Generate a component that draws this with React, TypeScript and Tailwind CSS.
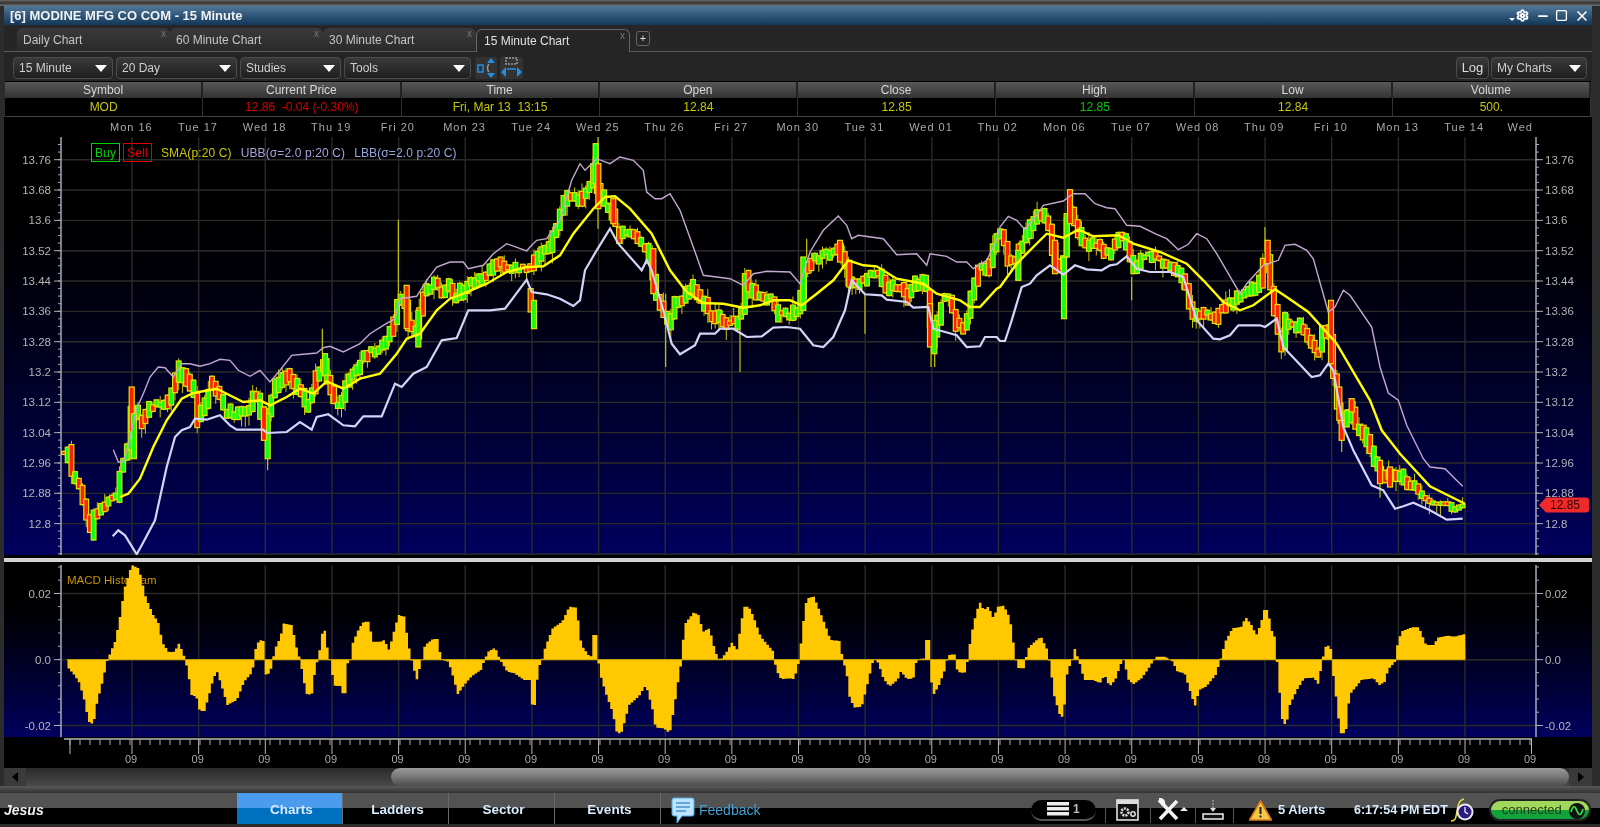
import { Minus, Settings, Square, X } from 'lucide-react'

type Pt = [number, number]

// zoom-crop readings -> page pixels
const seg = (ox: number, oy: number, pts: number[][]): Pt[] => pts.map(p => [ox + p[0] / 3, oy + p[1] / 3] as Pt)
const seg2 = (ox: number, pts: number[][]): Pt[] => pts.map(p => [ox + p[0] / 2.0907, 565 + p[1] / 3] as Pt)

const upper = [
  ...seg(60, 137, [[160,938],[175,975],[190,975],[205,925],[215,880],[232,810],[250,770],[270,720],[295,690],[315,692],[340,720],[365,680],[390,680],[420,688],[450,680],[480,667],[510,670],[535,700],[570,718],[600,700],[630,735],[660,700],[695,655],[730,652],[770,648],[790,632],[810,628],[850,645],[900,620],[930,590],[970,565],[1005,545],[1020,485],[1070,478],[1100,430],[1130,390],[1170,375],[1210,375],[1225,395],[1270,385],[1300,350],[1340,320],[1400,342]]),
  ...seg(530, 137, [[0,330],[20,310],[50,305],[90,250],[125,130],[150,80],[165,100],[200,65],[240,80],[270,60],[310,70],[340,100],[350,165],[375,185],[395,185],[420,170],[450,220],[490,330],[520,415],[560,420],[600,425],[640,445],[670,410],[710,403],[780,405],[810,440],[840,345],[880,280],[925,237],[950,265],[965,305],[985,295],[1060,305],[1100,353],[1160,350],[1190,385],[1200,350],[1250,358],[1280,375],[1310,375],[1330,395],[1370,370],[1400,310]]),
  ...seg(1000, 137, [[0,270],[25,238],[50,250],[75,278],[110,235],[130,205],[190,192],[220,170],[255,170],[285,200],[320,212],[345,215],[380,265],[420,268],[470,292],[500,305],[535,338],[565,322],[590,290],[620,305],[650,350],[720,470],[740,440],[790,385],[835,370],[855,325],[885,322],[920,340],[940,365],[985,525],[1005,510],[1030,460],[1050,475],[1115,570],[1140,690],[1165,768],[1195,790],[1220,865],[1270,965],[1290,990],[1335,995],[1365,1025],[1388,1048]]),
]

const lower = [
  ...seg(60, 137, [[158,1198],[175,1180],[195,1195],[230,1252],[245,1225],[285,1150],[320,990],[345,900],[365,880],[390,870],[405,845],[440,848],[480,835],[510,865],[530,878],[610,878],[620,888],[680,885],[720,855],[755,878],[770,840],[805,832],[850,865],[885,868],[910,838],[965,838],[1005,740],[1025,750],[1060,710],[1100,690],[1145,610],[1190,603],[1225,520],[1290,520],[1335,515],[1400,428]]),
  ...seg(530, 137, [[5,465],[50,472],[90,485],[130,507],[150,490],[165,400],[200,340],[240,275],[265,320],[335,400],[350,370],[365,400],[400,520],[425,620],[450,652],[495,625],[510,590],[555,590],[570,575],[610,575],[650,600],[695,598],[730,572],[770,570],[810,575],[850,625],[880,630],[910,600],[945,520],[965,430],[1005,472],[1055,475],[1070,488],[1130,495],[1150,512],[1195,510],[1210,575],[1280,595],[1310,630],[1350,628],[1365,600],[1400,600]]),
  ...seg(1000, 137, [[0,612],[15,612],[35,550],[65,450],[90,440],[110,415],[150,385],[190,413],[225,385],[260,397],[305,400],[330,385],[350,382],[380,358],[410,395],[450,405],[510,405],[550,420],[590,550],[640,605],[660,607],[690,595],[715,565],[780,565],[795,570],[830,545],[850,630],[935,720],[960,715],[985,680],[1000,700],[1030,870],[1060,940],[1115,1045],[1150,1060],[1185,1115],[1210,1108],[1240,1097],[1290,1120],[1340,1148],[1388,1145]]),
]

const sma = [
  ...seg(60, 137, [[180,1080],[205,1070],[240,1025],[280,930],[320,850],[365,785],[400,768],[470,755],[500,770],[550,795],[600,790],[630,805],[680,780],[720,755],[760,770],[800,733],[850,755],[900,725],[960,710],[1010,650],[1040,605],[1080,590],[1130,520],[1170,485],[1210,470],[1280,440],[1340,405],[1400,390]]),
  ...seg(530, 137, [[0,390],[40,388],[90,355],[130,290],[190,215],[225,180],[255,178],[300,215],[365,290],[420,400],[470,465],[520,498],[580,500],[640,512],[690,505],[730,490],[780,490],[815,505],[860,470],[910,430],[955,370],[1000,385],[1040,388],[1100,425],[1180,440],[1220,470],[1290,490],[1320,510],[1350,510],[1400,455]]),
  ...seg(1000, 137, [[0,450],[50,380],[100,330],[140,290],[190,302],[235,278],[280,298],[355,295],[400,320],[480,345],[560,380],[610,430],[670,495],[720,520],[760,505],[825,457],[860,480],[925,525],[1010,620],[1110,790],[1145,880],[1200,950],[1290,1048],[1395,1100]]),
]

const mid = [
  ...seg(60, 137, [[18,950],[25,915],[38,1005],[65,1050],[78,1120],[95,1185],[108,1120],[125,1125],[150,1085],[175,1070],[185,1000],[205,950],[215,820],[232,810],[250,860],[265,815],[290,800],[325,790],[345,745],[360,690],[385,740],[410,780],[415,850],[430,820],[445,780],[460,730],[480,780],[495,820],[515,835],[550,825],[575,815],[590,750],[615,870],[645,755],[680,715],[710,740],[740,800],[755,800],[770,720],[795,680],[825,800],[850,790],[860,740],[890,705],[920,650],[950,640],[980,620],[1005,550],[1015,490],[1040,490],[1050,570],[1075,590],[1090,470],[1130,440],[1150,470],[1170,445],[1190,490],[1215,450],[1240,435],[1280,420],[1305,380],[1340,385],[1380,395]]),
  ...seg(530, 137, [[10,400],[20,360],[60,330],[80,270],[110,190],[130,165],[150,190],[180,165],[195,100],[205,150],[225,190],[250,230],[270,300],[300,285],[320,310],[350,330],[370,400],[385,490],[420,570],[440,500],[460,490],[480,450],[510,480],[530,510],[550,540],[590,550],[620,560],[640,520],[650,410],[665,460],[690,480],[730,490],[745,530],[780,540],[810,510],[825,400],[850,365],[925,340],[950,390],[965,450],[1000,430],[1020,410],[1050,395],[1070,460],[1110,440],[1140,480],[1160,440],[1190,430],[1205,570],[1215,600],[1240,490],[1260,480],[1285,575],[1310,560],[1330,460],[1350,400],[1380,385],[1400,295]]),
  ...seg(1000, 137, [[10,290],[30,370],[50,370],[80,300],[115,220],[150,270],[165,350],[190,400],[200,300],[212,190],[230,260],[260,320],[290,322],[330,360],[345,330],[365,295],[385,330],[400,400],[430,360],[480,365],[520,400],[555,425],[580,530],[610,525],[650,545],[670,515],[710,490],[750,460],[780,440],[800,340],[830,540],[848,645],[860,545],[875,570],[900,570],[925,600],[945,630],[958,665],[972,580],[992,590],[1005,710],[1020,840],[1040,840],[1055,810],[1065,860],[1090,890],[1110,930],[1140,1000],[1160,1020],[1170,1020],[1200,1005],[1215,1035],[1250,1050],[1265,1075],[1300,1100],[1350,1100],[1360,1120],[1390,1105]]),
]

// hand-placed long candles: [x, top, bottom, green?]
type Tall = [number, number, number, boolean]
const toTall = (ox: number, list: Tall[]) => list.map(c => [ox + c[0] / 3, 137 + c[1] / 3, 137 + c[2] / 3, c[3]] as Tall)
const tall: Tall[] = [
  ...toTall(60, [[215,750,885,false],[222,830,965,true],[623,830,965,true],[612,810,910,false],[795,650,715,true],[1075,520,630,true],[1040,445,575,false],[1412,455,525,false],[1422,490,575,true]]),
  ...toTall(530, [[197,20,140,true],[205,80,215,false],[250,185,260,false],[370,335,470,false],[820,360,520,true],[930,310,375,false],[958,370,450,false],[1200,500,630,false],[1213,550,650,true]]),
  ...toTall(1000, [[192,360,545,true],[200,230,360,true],[210,158,260,false],[165,310,410,false],[55,340,430,true],[803,310,380,false],[993,490,680,false],[1140,970,1040,false],[1170,990,1050,false],[1055,785,825,false],[1040,820,870,true],[1025,850,910,false],[1018,750,850,false]]),
]

const wicks: [number, number, number][] = [
  [60 + 1015 / 3, 137 + 248 / 3, 137 + 490 / 3], [60 + 623 / 3, 137 + 960 / 3, 137 + 1000 / 3], [60 + 787 / 3, 137 + 575 / 3, 137 + 650 / 3],
  [530 + 204 / 3, 137, 137 + 275 / 3], [530 + 407 / 3, 137 + 470 / 3, 137 + 690 / 3], [530 + 630 / 3, 137 + 520 / 3, 137 + 705 / 3], [530 + 1005 / 3, 137 + 470 / 3, 137 + 590 / 3], [530 + 1203 / 3, 137 + 620 / 3, 137 + 690 / 3], [530 + 1214 / 3, 137 + 640 / 3, 137 + 690 / 3], [530 + 830 / 3, 137 + 305 / 3, 137 + 360 / 3],
  [1000 + 795 / 3, 137 + 270 / 3, 137 + 345 / 3], [1000 + 395 / 3, 137 + 420 / 3, 137 + 490 / 3], [1000 + 1025 / 3, 137 + 905 / 3, 137 + 945 / 3], [1000 + 1140 / 3, 137 + 1040 / 3, 137 + 1082 / 3],
]

const macd: Pt[] = [
  ...seg2(60, [[15,284],[18,310],[30,330],[40,352],[50,400],[60,470],[70,478],[78,410],[90,345],[98,290],[100,284],[105,265],[115,230],[125,160],[135,70],[150,0],[165,10],[180,100],[195,150],[205,170],[215,235],[228,262],[240,260],[248,235],[255,255],[262,284],[268,325],[275,390],[285,395],[292,438],[302,438],[310,400],[320,345],[328,318],[335,350],[350,420],[370,405],[385,350],[403,320],[405,284],[410,245],[417,225],[426,228],[428,284],[425,315],[432,332],[440,320],[445,284],[450,250],[460,220],[468,175],[485,180],[495,250],[502,284],[510,350],[517,392],[527,385],[535,300],[540,284],[545,235],[550,190],[555,200],[560,260],[565,290],[572,350],[578,375],[583,350],[590,385],[597,385],[602,290],[608,284],[612,235],[625,190],[635,170],[645,170],[655,230],[670,230],[678,225],[688,255],[700,190],[708,150],[720,155],[728,235],[735,284],[740,310],[745,350],[750,320],[757,284],[763,240],[780,222],[790,222],[797,284],[812,290],[820,325],[832,388],[845,360],[860,335],[880,315],[888,284],[895,260],[910,248],[920,284],[935,320],[950,325],[970,345],[982,345],[985,418],[993,420],[1000,310],[1008,284],[1015,245],[1030,190],[1050,170],[1065,125],[1080,128],[1090,240],[1105,270],[1112,275],[1115,210],[1123,210],[1125,284],[1130,330],[1140,380],[1155,440],[1165,508],[1175,500],[1190,420],[1210,395],[1225,360],[1240,440],[1245,488],[1262,490],[1275,505],[1285,420],[1295,325],[1300,284],[1305,180],[1325,142],[1335,150],[1345,200],[1358,190],[1370,260],[1380,287],[1395,258],[1405,232],[1415,255],[1430,125],[1440,125],[1450,155],[1465,215],[1480,240],[1492,260],[1497,315],[1508,343],[1525,340],[1535,343]]),
  ...seg2(790, [[20,284],[25,200],[35,100],[50,95],[60,130],[75,185],[85,225],[105,228],[110,284],[118,320],[125,400],[135,428],[150,425],[160,370],[170,310],[175,280],[185,295],[195,340],[208,365],[225,345],[232,320],[245,343],[258,340],[265,284],[280,280],[285,225],[293,225],[295,345],[300,390],[312,360],[325,310],[330,270],[345,268],[350,320],[365,325],[372,284],[378,215],[390,140],[397,112],[405,135],[415,125],[425,158],[435,125],[447,122],[460,160],[465,210],[472,284],[478,310],[492,310],[495,255],[510,232],[525,215],[538,255],[545,310],[552,390],[565,455],[572,455],[580,320],[590,285],[595,250],[605,290],[615,345],[635,345],[648,355],[658,330],[668,365],[680,345],[695,284],[700,284],[705,340],[718,358],[735,340],[750,310],[765,275],[785,275],[800,290],[810,320],[825,325],[840,395],[848,425],[855,375],[870,365],[890,330],[900,284],[910,230],[925,190],[945,185],[952,155],[965,180],[975,210],[985,175],[990,135],[1000,135],[1005,190],[1015,220],[1018,284],[1025,405],[1030,475],[1038,478],[1045,420],[1060,375],[1075,340],[1095,338],[1105,358],[1113,284],[1120,245],[1130,240],[1135,320],[1145,435],[1150,505],[1162,505],[1170,390],[1195,345],[1220,340],[1232,360],[1245,350],[1250,315],[1265,290],[1270,240],[1278,200],[1300,187],[1315,187],[1330,240],[1345,240],[1355,218],[1375,212],[1390,215],[1408,208]]),
]

const interp = (pts: Pt[], x: number) => {
  if (x <= pts[0][0]) return pts[0][1]
  for (let i = 1; i < pts.length; i++) {
    if (x <= pts[i][0]) {
      const [x0, y0] = pts[i - 1]
      const [x1, y1] = pts[i]
      return x1 === x0 ? y1 : y0 + ((x - x0) / (x1 - x0)) * (y1 - y0)
    }
  }
  return pts[pts.length - 1][1]
}

let seed = 41
const rnd = () => {
  seed = (seed * 16807) % 2147483647
  return seed / 2147483647
}

const candles: { x: number; top: number; bot: number; hi: number; lo: number; up: boolean }[] = []
for (let x = 64; x < 1463; x += 3.7) {
  const a = interp(mid, x - 1.8)
  const b = interp(mid, x + 1.8)
  // flat stretch on the far right is much tighter than the rest
  const pad = x > 1420 ? 1 + rnd() : 1.5 + rnd() * 4.5
  const jitter = x > 1420 ? 0 : (rnd() - 0.5) * 7
  const top = Math.min(a, b) - pad + jitter
  const bot = Math.max(a, b) + pad + jitter
  candles.push({
    x,
    top,
    bot,
    hi: top - (rnd() < 0.55 ? rnd() * 9 : 1),
    lo: bot + (rnd() < 0.55 ? rnd() * 11 : 1),
    up: b < a ? rnd() < 0.75 : rnd() < 0.4,
  })
}

const ZERO = 659.7
let macdPath = `M67.5 ${ZERO}`
for (let x = 67.5; x < 1465; x += 2.56) {
  const y = interp(macd, x + 1.28)
  macdPath += `L${x.toFixed(2)} ${y.toFixed(1)}L${(x + 2.56).toFixed(2)} ${y.toFixed(1)}`
}
macdPath += `L1465.5 ${ZERO}Z`

const grid = Array.from({ length: 21 }, (_, i) => 132 + i * 66.65)
const priceLines = Array.from({ length: 14 }, (_, i) => 159.7 + i * 30.33)
const priceLabels = ['13.76', '13.68', '13.6', '13.52', '13.44', '13.36', '13.28', '13.2', '13.12', '13.04', '12.96', '12.88', '12.8']
const priceTicks = Array.from({ length: 55 }, (_, i) => 144.5 + i * 7.58)
const macdTicks = Array.from({ length: 13 }, (_, i) => 567 + i * 13.2)
const macdLabels: [string, number][] = [['0.02', 593.5], ['0.0', ZERO], ['-0.02', 725.5]]
const days = ['Mon 16', 'Tue 17', 'Wed 18', 'Thu 19', 'Fri 20', 'Mon 23', 'Tue 24', 'Wed 25', 'Thu 26', 'Fri 27', 'Mon 30', 'Tue 31', 'Wed 01', 'Thu 02', 'Mon 06', 'Tue 07', 'Wed 08', 'Thu 09', 'Fri 10', 'Mon 13', 'Tue 14']
const rulerMinor = Array.from({ length: 147 }, (_, i) => 70 + i * 10)
const rulerMajor = [70, ...grid, 1531.5]

const line = (pts: Pt[]) => pts.map(p => `${p[0].toFixed(1)},${p[1].toFixed(1)}`).join(' ')

function Select({ label, className }: { label: string; className: string }) {
  return (
    <div className={`h-[22px] flex items-center justify-between pl-[5px] pr-[5px] rounded-[4px] border border-[#4c4c4c] bg-linear-to-b from-[#3a3a3a] to-[#1f1f1f] text-[12px] text-[#cfcfcf] ${className}`}>
      <span>{label}</span>
      <span className="w-0 h-0 border-l-[6px] border-r-[6px] border-t-[7px] border-l-transparent border-r-transparent border-t-white" />
    </div>
  )
}

function Tab({ label, active }: { label: string; active?: boolean }) {
  return (
    <div className={`relative h-[23px] flex items-center rounded-t-[6px] text-[12px] ${active ? 'w-[154px] pl-[7px] bg-[#262626] border-t border-l border-r border-[#666] text-[#e0e0e0] -mb-px' : 'w-[153px] pl-[6px] bg-linear-to-b from-[#3a3a3a] to-[#2a2a2a] text-[#c4c4c4]'}`}>
      {label}
      <span className="absolute right-[4px] top-[0px] text-[10px] leading-[12px] text-[#777]">x</span>
    </div>
  )
}

const quotes: { head: string; value: string; color: string }[] = [
  { head: 'Symbol', value: 'MOD', color: 'text-[#c8c800]' },
  { head: 'Current Price', value: '12.86  -0.04 (-0.30%)', color: 'text-[#d80000]' },
  { head: 'Time', value: 'Fri, Mar 13  13:15', color: 'text-[#c8c800]' },
  { head: 'Open', value: '12.84', color: 'text-[#c8c800]' },
  { head: 'Close', value: '12.85', color: 'text-[#c8c800]' },
  { head: 'High', value: '12.85', color: 'text-[#00c800]' },
  { head: 'Low', value: '12.84', color: 'text-[#c8c800]' },
  { head: 'Volume', value: '500.', color: 'text-[#c8c800]' },
]

function NavButton({ label, active }: { label: string; active?: boolean }) {
  return (
    <div className={`w-[106px] h-full flex items-center justify-center pl-[4px] pt-[3px] text-[13.5px] font-bold border-r border-[#6a6a6a] text-[#d8ecff] ${active ? 'bg-linear-to-b from-[#4b9bee] from-50% to-[#0070c0] to-50%' : 'bg-linear-to-b from-[#525252] from-50% to-black to-50%'}`}>
      {label}
    </div>
  )
}

const Sep = () => <div className="w-px h-[26px] bg-[#555]" />

export default function App() {
  return (
    <div className="w-[1600px] h-[827px] overflow-hidden bg-[#2c2c2c] flex flex-col text-white blur-[0.4px]" style={{ fontFamily: '"Liberation Sans", Arial, sans-serif' }}>
      <div className="h-[6px] bg-linear-to-b from-[#666] via-[#333] to-[#777]" />

      <div className="flex-1 min-h-0 flex flex-col mx-[4px] mr-[8px]">
        {/* title bar */}
        <div className="h-[19px] flex items-center justify-between pl-[6px] pr-[2px] bg-linear-to-b from-[#507899] to-[#113759]">
          <span className="text-[13px] font-bold text-[#f2f2f2]">[6] MODINE MFG CO COM - 15 Minute</span>
          <div className="flex items-center text-white">
            <span className="w-0 h-0 mt-[8px] mr-[1px] border-l-[3px] border-r-[3px] border-t-[3px] border-l-transparent border-r-transparent border-t-white" />
            <Settings className="w-[13px] h-[13px] mr-[7px]" strokeWidth={3.5} />
            <Minus className="w-[14px] h-[14px] mr-[5px]" strokeWidth={3} />
            <Square className="w-[13px] h-[13px] mr-[6px]" strokeWidth={2.5} />
            <X className="w-[16px] h-[16px]" strokeWidth={2.5} />
          </div>
        </div>

        {/* chart tabs */}
        <div className="h-[27px] flex items-end pl-[13px] bg-[#262626] border-b border-[#5a5a5a]">
          <Tab label="Daily Chart" />
          <Tab label="60 Minute Chart" />
          <Tab label="30 Minute Chart" />
          <Tab label="15 Minute Chart" active />
          <div className="w-[14px] h-[15px] ml-[6px] mb-[5px] flex items-center justify-center rounded-[3px] border border-[#666] text-[11px] leading-none text-[#ddd]">+</div>
        </div>

        {/* toolbar */}
        <div className="h-[29px] flex items-center pt-[3px] pl-[9px] pr-[5px] bg-[#252525]">
          <Select label="15 Minute" className="w-[100px] mr-[3px]" />
          <Select label="20 Day" className="w-[121px] mr-[3px]" />
          <Select label="Studies" className="w-[101px] mr-[3px]" />
          <Select label="Tools" className="w-[127px] mr-[4px]" />
          <svg width="22" height="22" viewBox="0 0 22 22" className="bg-[#333] rounded-[2px] mr-[3px]">
            <rect x="3" y="8" width="5" height="7" fill="none" stroke="#1e90e8" strokeWidth="1.5" />
            <path d="M16 1l4 5h-8zM16 21l4-5h-8z" fill="#1e90e8" />
            <path d="M14 7c-2 2-2 6 0 8" stroke="#999" strokeWidth="1.5" fill="none" />
          </svg>
          <svg width="23" height="22" viewBox="0 0 23 22" className="bg-[#333] rounded-[2px]">
            <rect x="6" y="1" width="11" height="6" fill="none" stroke="#999" strokeWidth="1.5" strokeDasharray="2 1" />
            <path d="M1 15l5-5v10zM22 15l-5-5v10z" fill="#1e90e8" />
            <path d="M7 12h9" stroke="#1e90e8" strokeWidth="1.5" />
          </svg>
          <div className="flex-1" />
          <div className="w-[33px] h-[22px] mr-[2px] flex items-center justify-center rounded-[4px] border border-[#4c4c4c] bg-linear-to-b from-[#3a3a3a] to-[#1f1f1f] text-[13px] text-[#ddd]">Log</div>
          <Select label="My Charts" className="w-[96px]" />
        </div>

        {/* quote table */}
        <div className="grid grid-cols-8 ml-[1px] mr-[1px] bg-black">
          {quotes.map(q => (
            <div key={q.head} className="h-[16px] mt-px flex items-center justify-center bg-linear-to-b from-[#585858] to-[#333] border-r-2 border-[#222] text-[12px] text-[#d8d8d8]">{q.head}</div>
          ))}
          {quotes.map(q => (
            <div key={q.head} className={`h-[19px] flex items-center justify-center whitespace-pre border-r border-[#333] border-b border-b-[#444] text-[12px] ${q.color}`}>{q.value}</div>
          ))}
        </div>

        {/* day labels */}
        <div className="h-[20px] flex items-center pl-[94px] bg-black text-[11px] tracking-[1px] text-[#a8a8a8]">
          {days.map(d => (
            <div key={d} className="w-[66.65px] shrink-0 text-center">{d}</div>
          ))}
          <div className="pl-[10px]">Wed</div>
        </div>

        {/* price panel */}
        <div className="relative h-[418px] bg-linear-to-b from-black from-5% to-[#00005e]">
          <svg width="1588" height="418" viewBox="4 137 1588 418" className="block">
            {grid.map(x => <line key={x} x1={x} x2={x} y1={137} y2={555} stroke="#2a2a2a" strokeWidth="1.4" />)}
            {priceLines.map(y => <line key={y} x1={62} x2={1536} y1={y} y2={y} stroke="#2a2a2a" strokeWidth="1.4" />)}
            <line x1={61} x2={61} y1={137} y2={555} stroke="#a8a8b8" strokeWidth="1.5" />
            <line x1={1536} x2={1536} y1={137} y2={555} stroke="#a8a8b8" strokeWidth="1.5" />
            {priceTicks.map(y => (
              <g key={y} stroke="#a8a8b8">
                <line x1={58} x2={61} y1={y} y2={y} />
                <line x1={1536} x2={1539} y1={y} y2={y} />
              </g>
            ))}
            {priceLabels.map((t, i) => {
              const y = 159.7 + i * 30.33
              return (
                <g key={t}>
                  <line x1={54} x2={61} y1={y} y2={y} stroke="#b0b0b0" />
                  <line x1={1536} x2={1543} y1={y} y2={y} stroke="#b0b0b0" />
                  <text x={51} y={y + 4} textAnchor="end" fontSize="11.5" fill="#b4b4b4">{t}</text>
                  <text x={1545} y={y + 4} fontSize="11.5" fill="#b4b4b4">{t}</text>
                </g>
              )
            })}

            {candles.map(c => (
              <g key={c.x}>
                <line x1={c.x} x2={c.x} y1={c.hi} y2={c.lo} stroke="#c8c800" />
                <rect x={c.x - 2.4} y={c.top} width={4.8} height={c.bot - c.top} fill={c.up ? '#10ff10' : '#ff2000'} stroke="#e4e400" strokeWidth="1.2" />
              </g>
            ))}
            {wicks.map(w => <line key={w[0]} x1={w[0]} x2={w[0]} y1={w[1]} y2={w[2]} stroke="#c8c800" strokeWidth="1.2" />)}
            {tall.map(c => (
              <rect key={c[0]} x={c[0] - 2.5} y={c[1]} width={5} height={c[2] - c[1]} fill={c[3] ? '#10ff10' : '#ff2000'} stroke="#e4e400" strokeWidth="1.2" />
            ))}

            <polyline points={line(upper)} fill="none" stroke="#c4a8d0" strokeWidth="1.4" />
            <polyline points={line(lower)} fill="none" stroke="#d4d4f8" strokeWidth="2.2" />
            <polyline points={line(sma)} fill="none" stroke="#ffff00" strokeWidth="2.4" />

            {/* last price flag */}
            <path d="M1539 505l7-7.500h40q3 0 3 3v9q0 3-3 3h-40z" fill="#f02a2a" />
            <text x={1565} y={509} textAnchor="middle" fontSize="12" fill="#300">12.85</text>
          </svg>

          {/* study legend */}
          <div className="absolute left-[87px] top-[6px] flex items-center text-[12px] tracking-[0.12px]">
            <div className="w-[29px] h-[19px] flex items-center justify-center border border-[#00d000] text-[#00d000]">Buy</div>
            <div className="w-[29px] h-[19px] ml-[3px] flex items-center justify-center border border-[#e00000] text-[#e00000]">Sell</div>
            <div className="ml-[9px] text-[#c8c800]">SMA(p:20 C)</div>
            <div className="ml-[9px] text-[#a8a0dc]">UBB(σ=2.0 p:20 C)</div>
            <div className="ml-[9px] text-[#94a4dc]">LBB(σ=2.0 p:20 C)</div>
          </div>
        </div>

        <div className="h-[3px] bg-black" />
        <div className="h-[4px] bg-[#d2d2d2]" />
        <div className="h-[3px] bg-black" />

        {/* MACD panel */}
        <div className="h-[172px] bg-linear-to-b from-black from-5% to-[#00005e]">
          <svg width="1588" height="172" viewBox="4 565 1588 172" className="block">
            {grid.map(x => <line key={x} x1={x} x2={x} y1={565} y2={737} stroke="#2a2a2a" strokeWidth="1.4" />)}
            {macdLabels.map(([t, y]) => (
              <g key={t}>
                <line x1={62} x2={1536} y1={y} y2={y} stroke="#2a2a2a" strokeWidth="1.4" />
                <line x1={54} x2={61} y1={y} y2={y} stroke="#b0b0b0" />
                <line x1={1536} x2={1543} y1={y} y2={y} stroke="#b0b0b0" />
                <text x={51} y={y + 4} textAnchor="end" fontSize="11.5" fill="#b4b4b4">{t}</text>
                <text x={1545} y={y + 4} fontSize="11.5" fill="#b4b4b4">{t}</text>
              </g>
            ))}
            <line x1={61} x2={61} y1={565} y2={737} stroke="#a8a8b8" strokeWidth="1.5" />
            <line x1={1536} x2={1536} y1={565} y2={737} stroke="#a8a8b8" strokeWidth="1.5" />
            {macdTicks.map(y => (
              <g key={y} stroke="#a8a8b8">
                <line x1={58} x2={61} y1={y} y2={y} />
                <line x1={1536} x2={1539} y1={y} y2={y} />
              </g>
            ))}
            <text x={67} y={584} fontSize="11.5" fill="#c89400">MACD Histogram</text>
            <path d={macdPath} fill="#ffc800" />
            <line x1={67} x2={1465} y1={ZERO} y2={ZERO} stroke="#d8b000" />
          </svg>
        </div>

        {/* time ruler */}
        <div className="h-[31px] bg-black">
          <svg width="1588" height="31" viewBox="4 737 1588 31" className="block">
            <line x1={64} x2={1532} y1={739} y2={739} stroke="#b8b8b8" strokeWidth="1.5" />
            {rulerMinor.map(x => <line key={x} x1={x} x2={x} y1={739} y2={745} stroke="#a8a8a8" />)}
            {rulerMajor.map(x => <line key={x} x1={x} x2={x} y1={739} y2={754} stroke="#b8b8b8" />)}
            {grid.map(x => <text key={x} x={x - 1} y={763} textAnchor="middle" fontSize="11" fill="#a8a8a8">09</text>)}
            <text x={1524} y={763} fontSize="11" fill="#a8a8a8">09</text>
          </svg>
        </div>

        {/* scroll bar */}
        <div className="h-[18px] flex items-center bg-linear-to-b from-[#2a2a2a] to-[#4a4a4a]">
          <div className="w-[22px] h-full flex items-center justify-center bg-[#3a3a3a]">
            <span className="w-0 h-0 border-t-[5px] border-b-[5px] border-r-[6px] border-t-transparent border-b-transparent border-r-black" />
          </div>
          <div className="w-[365px]" />
          <div className="w-[1178px] h-full rounded-l-[14px] rounded-r-[14px] bg-linear-to-b from-[#9a9a9a] via-[#777] to-[#4c4c4c]" />
          <div className="flex-1 h-full flex items-center justify-center bg-[#3a3a3a]">
            <span className="w-0 h-0 border-t-[5px] border-b-[5px] border-l-[6px] border-t-transparent border-b-transparent border-l-black" />
          </div>
        </div>
      </div>

      <div className="h-[7px] bg-linear-to-b from-[#5a5a5a] to-[#333]" />

      {/* status bar */}
      <div className="h-[31px] flex items-center bg-linear-to-b from-[#525252] from-50% to-black to-50% text-[#d8ecff]">
        <div className="w-[237px] pl-[4px] pt-[3px] text-[14px] font-bold italic text-[#eee]">Jesus</div>
        <NavButton label="Charts" active />
        <NavButton label="Ladders" />
        <NavButton label="Sector" />
        <NavButton label="Events" />
        <div className="flex-1 h-full flex items-center pt-[3px]">
          <svg width="24" height="30" viewBox="0 0 24 30" className="ml-[10px]">
            <path d="M3 3h18q2 0 2 2v14q0 2-2 2h-10l-5 7v-7h-3q-2 0-2-2v-14q0-2 2-2z" fill="#bde4ff" stroke="#4aa8e8" />
            <path d="M5 8h14M5 12h14M5 16h10" stroke="#4a90c8" strokeWidth="1.5" />
          </svg>
          <span className="ml-[4px] w-[332px] text-[14px] text-[#3fa2d8]">Feedback</span>

          <div className="w-[65px] h-[21px] flex items-center pl-[16px] rounded-full bg-black border-b-2 border-[#555] text-[13px]">
            <svg width="24" height="14" viewBox="0 0 24 14" fill="#eee"><path d="M0 0h22v3.500h-22zM0 5h22v3.500h-22zM0 10h22v3.500h-22z" /></svg>
            <span className="ml-[2px] font-bold text-[12px] text-[#bbb]">1</span>
          </div>
          <div className="ml-[9px]"><Sep /></div>
          <svg width="24" height="24" viewBox="0 0 24 24" className="ml-[10px]">
            <rect x="1" y="2" width="21" height="20" fill="#111" stroke="#eee" strokeWidth="1.500" />
            <rect x="1" y="2" width="21" height="4" fill="#ddd" />
            <circle cx="9" cy="14" r="3.500" fill="none" stroke="#ddd" strokeWidth="2.500" strokeDasharray="2 1" />
            <circle cx="17" cy="16" r="2.200" fill="none" stroke="#ddd" strokeWidth="1.500" />
          </svg>
          <div className="ml-[10px]"><Sep /></div>
          <svg width="32" height="24" viewBox="0 0 32 24" className="ml-[6px]">
            <path d="M2 2l18 19M20 3l-17 18" stroke="#f4f4f4" strokeWidth="3.500" />
            <path d="M2 1q5 0 5 5" stroke="#f4f4f4" strokeWidth="2.500" fill="none" />
            <path d="M23 13l4-4 4 4z" fill="#eee" />
          </svg>
          <div className="ml-[6px]"><Sep /></div>
          <svg width="22" height="22" viewBox="0 0 22 22" className="ml-[6px]">
            <path d="M11 1v10" stroke="#bbb" strokeDasharray="2 1" />
            <path d="M8 9l3 4 3-4z" fill="#ddd" />
            <path d="M1 15h20v5h-20z" fill="#111" stroke="#eee" strokeWidth="1.500" />
          </svg>
          <div className="ml-[9px]"><Sep /></div>
          <svg width="23" height="21" viewBox="0 0 23 21" className="ml-[15px]">
            <path d="M11.500 1l11 19h-22z" fill="#f5c84a" stroke="#d87818" strokeWidth="1.500" />
            <path d="M11.500 7v7M11.500 15.500v2" stroke="#222" strokeWidth="2" />
          </svg>
          <span className="ml-[6px] w-[76px] text-[13px] font-bold">5 Alerts</span>
          <span className="text-[12.5px] font-bold whitespace-nowrap">6:17:54 PM EDT</span>
          <svg width="24" height="24" viewBox="0 0 24 24" className="ml-[2px]">
            <path d="M1 23c5 0 5-4 6-10s2-11 7-12" stroke="#e8d840" strokeWidth="1.500" fill="none" />
            <circle cx="15" cy="14" r="7.500" fill="#2c1a7c" stroke="#e8e8f8" strokeWidth="2" />
            <path d="M15 9v5l3 2" stroke="#fff" strokeWidth="1.200" fill="none" />
          </svg>
          <div className="relative ml-[15px] w-[102px] h-[22px] flex items-center pl-[11px] rounded-full border-2 border-[#222] bg-linear-to-b from-[#a2d85c] from-50% to-[#12a23c] to-50% text-[13px]">
            <span className="text-[#1c3a14]">connected</span>
            <svg width="16" height="16" viewBox="0 0 16 16" className="absolute right-[4px] top-[2px]">
              <circle cx="8" cy="8" r="8" fill="#111" />
              <path d="M2 9c2-8 4-6 6-1s4 5 6-2" stroke="#30e040" strokeWidth="1.800" fill="none" />
            </svg>
          </div>
        </div>
      </div>
      <div className="h-[3px] bg-[#2c2c2c]" />
    </div>
  )
}
